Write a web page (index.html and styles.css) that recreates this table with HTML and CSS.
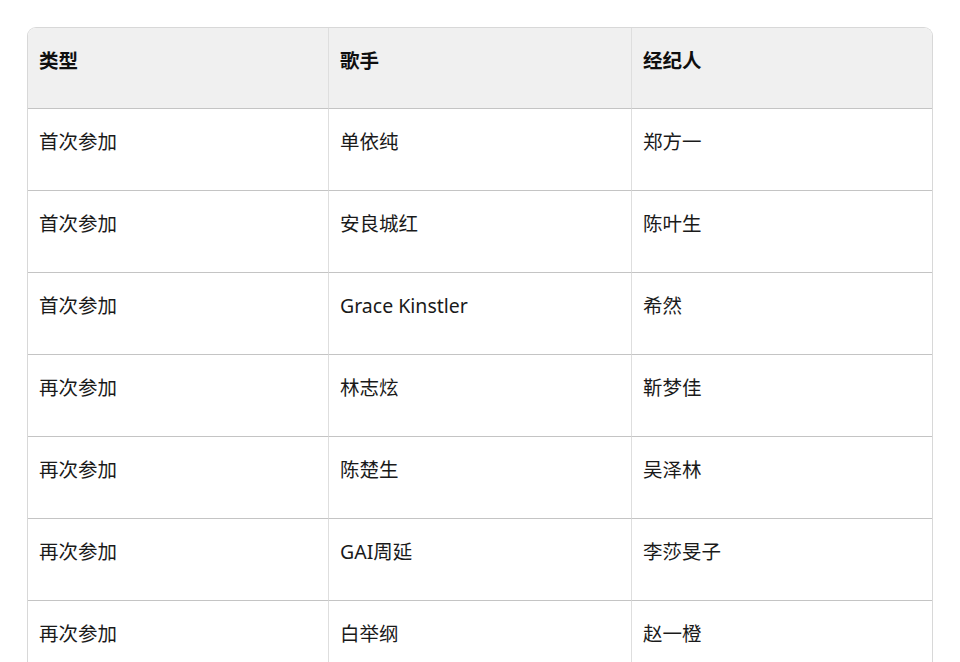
FILE: index.html
```html
<!DOCTYPE html>
<html lang="zh-CN">
<head>
<meta charset="utf-8">
<title>表格</title>
<link rel="stylesheet" href="styles.css">
</head>
<body>
<div class="page">
  <div class="table">
    <div class="cell head first">类型</div>
    <div class="cell head">歌手</div>
    <div class="cell head last">经纪人</div>

    <div class="cell first">首次参加</div>
    <div class="cell">单依纯</div>
    <div class="cell last">郑方一</div>

    <div class="cell first">首次参加</div>
    <div class="cell">安良城红</div>
    <div class="cell last">陈叶生</div>

    <div class="cell first">首次参加</div>
    <div class="cell">Grace Kinstler</div>
    <div class="cell last">希然</div>

    <div class="cell first">再次参加</div>
    <div class="cell">林志炫</div>
    <div class="cell last">靳梦佳</div>

    <div class="cell first">再次参加</div>
    <div class="cell">陈楚生</div>
    <div class="cell last">吴泽林</div>

    <div class="cell first">再次参加</div>
    <div class="cell">GAI周延</div>
    <div class="cell last">李莎旻子</div>

    <div class="cell first">再次参加</div>
    <div class="cell">白举纲</div>
    <div class="cell last">赵一橙</div>
  </div>
</div>
</body>
</html>
```

FILE: styles.css
```css
html, body {
  margin: 0;
  padding: 0;
  background: #ffffff;
  overflow: hidden;
}

.page {
  padding: 27px 0 0 27px;
  width: 906px;
  font-family: "Noto Sans", "Noto Sans CJK SC", sans-serif;
  font-size: 19.5px;
  color: #1a1a1a;
}

.table {
  display: grid;
  grid-template-columns: 300px 303px 302px;
  border: 1px solid #d8d8d8;
  border-bottom: none;
  border-radius: 9px 9px 0 0;
  overflow: hidden;
}

.cell {
  height: 82px;
  box-sizing: border-box;
  padding: 20px 10px 0 11px;
  line-height: 26px;
  border-bottom: 1.5px solid #c4c4c4;
  border-left: 1px solid #dedede;
}

.cell.first {
  border-left: none;
}

.head {
  background: #f0f0f0;
  font-weight: 700;
  color: #0f0f0f;
  height: 81px;
}
```
